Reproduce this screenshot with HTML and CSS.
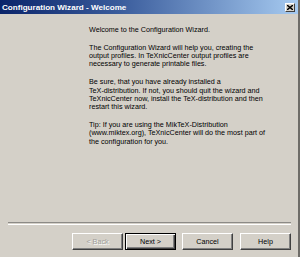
FILE: index.html
```html
<!DOCTYPE html>
<html>
<head>
<meta charset="utf-8">
<link rel="stylesheet" href="styles.css">
</head>
<body>
<div class="window">
  <div class="titlebar">
    <span class="title">Configuration Wizard - Welcome</span>
    <span class="close">
      <svg width="6" height="5" viewBox="0 0 6 5"><path d="M0 0 L6 5 M6 0 L0 5" stroke="#000" stroke-width="1.4"/></svg>
    </span>
  </div>
  <div class="content">
    <p>Welcome to the Configuration Wizard.</p>
    <p>The Configuration Wizard will help you, creating the<br>output profiles. In TeXnicCenter output profiles are<br>necessary to generate printable files.</p>
    <p>Be sure, that you have already installed a<br>TeX-distribution. If not, you should quit the wizard and<br>TeXnicCenter now, install the TeX-distribution and then<br>restart this wizard.</p>
    <p>Tip: If you are using the MikTeX-Distribution<br>(www.miktex.org), TeXnicCenter will do the most part of<br>the configuration for you.</p>
  </div>
  <div class="separator"></div>
  <div class="buttons">
    <button class="btn disabled">&lt; Back</button>
    <button class="btn default">Next &gt;</button>
    <button class="btn cancel">Cancel</button>
    <button class="btn help">Help</button>
  </div>
</div>
</body>
</html>
```
FILE: styles.css
```css
html, body {
  margin: 0;
  padding: 0;
  background: #d4d0c8;
}
.window {
  width: 300px;
  height: 257px;
  display: flex;
  flex-direction: column;
  background: #d4d0c8;
  font-family: "Liberation Sans", Arial, sans-serif;
  font-size: 7.2px;
  color: #000;
  box-sizing: border-box;
  border-right: 2px solid #6e6c68;
}
.titlebar {
  height: 14px;
  flex: none;
  display: flex;
  align-items: center;
  justify-content: space-between;
  padding: 0 3px 0 2px;
  background: linear-gradient(to right, #0a246a 0%, #3a5c9c 40%, #a6caf0 100%);
}
.title {
  color: #fff;
  font-weight: bold;
  font-size: 8.1px;
}
.close {
  width: 10px;
  height: 9px;
  box-sizing: border-box;
  background: #d4d0c8;
  border: 1px solid;
  border-color: #fff #404040 #404040 #fff;
  display: flex;
  align-items: center;
  justify-content: center;
}
.content {
  flex: 1;
  padding: 12px 0 0 89px;
}
.content p {
  margin: 0 0 9.6px 0;
  line-height: 8.3px;
}
.separator {
  flex: none;
  height: 1px;
  margin: 0 7px 0 8px;
  border-top: 1px solid #8c8a86;
  border-bottom: 1px solid #fff;
}
.buttons {
  flex: none;
  display: flex;
  justify-content: flex-end;
  padding: 8px 7px 7px 0;
}
.btn {
  width: 51px;
  height: 17px;
  margin: 0;
  padding: 0;
  font-family: "Liberation Sans", Arial, sans-serif;
  font-size: 7.2px;
  color: #000;
  background: #d4d0c8;
  border: 1px solid;
  border-color: #fff #404040 #404040 #fff;
  box-shadow: inset -1px -1px 0 #808080;
}
.btn.disabled {
  color: #a09e9a;
  text-shadow: 1px 1px 0 #fff;
}
.btn.default {
  margin-left: 2px;
  border: 1px solid #000;
  box-shadow: inset 1px 1px 0 #fff, inset -1px -1px 0 #404040, inset -2px -2px 0 #808080;
}
.btn.cancel {
  margin-left: 6px;
}
.btn.help {
  margin-left: 7px;
}
```
